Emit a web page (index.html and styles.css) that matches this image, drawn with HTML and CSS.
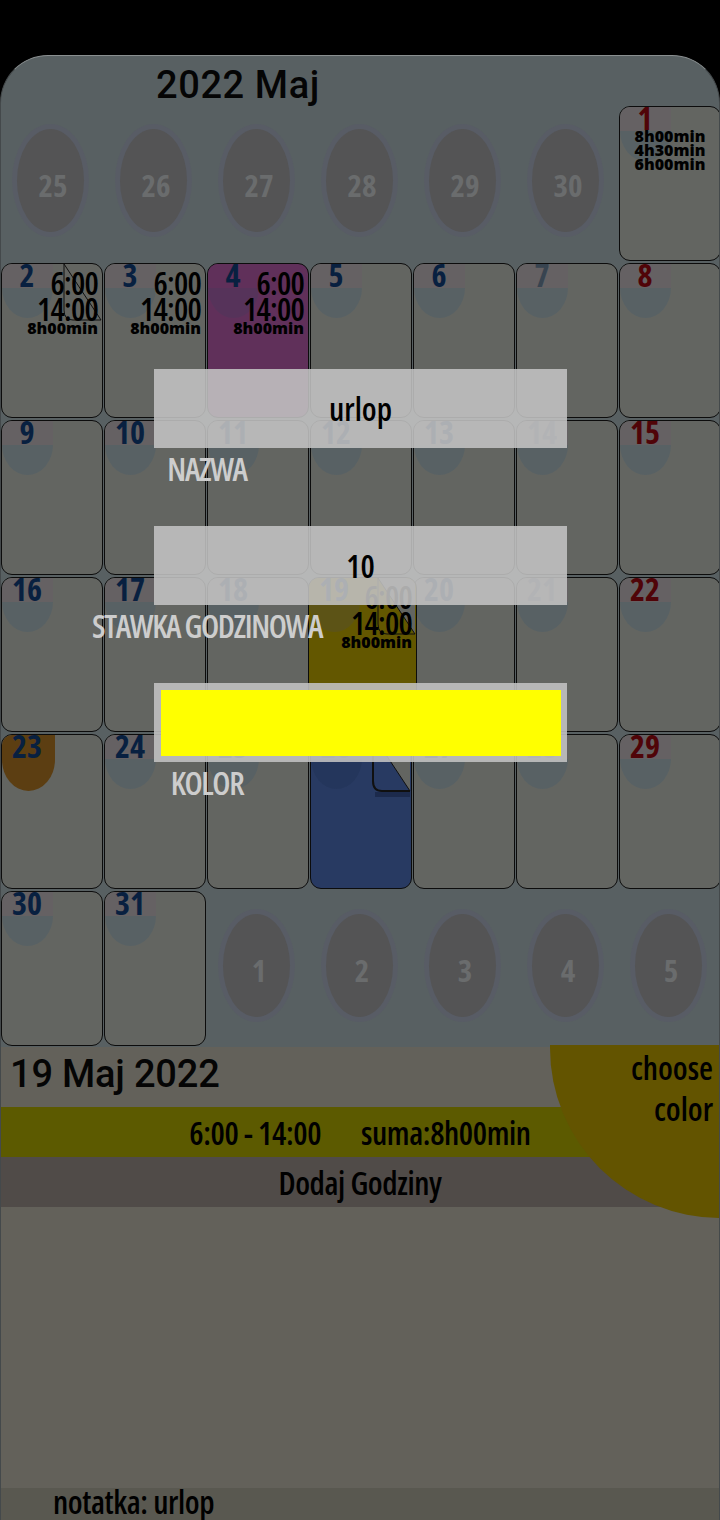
FILE: index.html
```html
<!DOCTYPE html>
<html lang="pl">
<head>
<meta charset="utf-8">
<title>Kalendarz</title>
<link rel="stylesheet" href="styles.css">
</head>
<body>
<main class="app">
  <h1 class="title">2022 Maj</h1>
  <section class="grid">
    <div class="out"><span class="oval">25</span></div>
    <div class="out"><span class="oval">26</span></div>
    <div class="out"><span class="oval">27</span></div>
    <div class="out"><span class="oval">28</span></div>
    <div class="out"><span class="oval">29</span></div>
    <div class="out"><span class="oval">30</span></div>
    <div class="day sun"><span class="num">1</span><div class="sums"><p>8h00min</p><p>4h30min</p><p>6h00min</p></div></div>

    <div class="day"><span class="num">2</span><svg class="fold" viewBox="0 0 40 58"><path d="M2 0L39 56"/><path d="M2 0V46Q2 56 11 56H39"/></svg><div class="shift"><p>6:00</p><p>14:00</p><small>8h00min</small></div></div>
    <div class="day"><span class="num">3</span><div class="shift"><p>6:00</p><p>14:00</p><small>8h00min</small></div></div>
    <div class="day pink"><span class="num">4</span><div class="shift"><p>6:00</p><p>14:00</p><small>8h00min</small></div></div>
    <div class="day"><span class="num">5</span></div>
    <div class="day"><span class="num">6</span></div>
    <div class="day sat"><span class="num">7</span></div>
    <div class="day sun"><span class="num">8</span></div>

    <div class="day"><span class="num">9</span></div>
    <div class="day"><span class="num">10</span></div>
    <div class="day"><span class="num">11</span></div>
    <div class="day"><span class="num">12</span></div>
    <div class="day"><span class="num">13</span></div>
    <div class="day sat"><span class="num">14</span></div>
    <div class="day sun"><span class="num">15</span></div>

    <div class="day"><span class="num">16</span></div>
    <div class="day"><span class="num">17</span></div>
    <div class="day"><span class="num">18</span></div>
    <div class="day gold"><span class="num">19</span><svg class="fold" viewBox="0 0 40 58"><path class="corner" d="M2 0L39 56V0Z"/><path d="M2 0L39 56"/><path d="M2 0V46Q2 56 11 56H39"/></svg><div class="shift"><p>6:00</p><p>14:00</p><small>8h00min</small></div></div>
    <div class="day"><span class="num">20</span></div>
    <div class="day sat"><span class="num">21</span></div>
    <div class="day sun"><span class="num">22</span></div>

    <div class="day orange"><span class="num">23</span></div>
    <div class="day"><span class="num">24</span></div>
    <div class="day"><span class="num">25</span></div>
    <div class="day blue"><span class="num">26</span><svg class="fold" viewBox="0 0 40 64"><path class="corner" d="M2 0L39 56V0Z"/><path class="shade" d="M4 57H39V62H4Z"/><path d="M2 0L39 56"/><path class="thick" d="M2 0V46Q2 56 11 56H39"/></svg></div>
    <div class="day"><span class="num">27</span></div>
    <div class="day sat"><span class="num">28</span></div>
    <div class="day sun"><span class="num">29</span></div>

    <div class="day"><span class="num">30</span></div>
    <div class="day"><span class="num">31</span></div>
    <div class="out"><span class="oval">1</span></div>
    <div class="out"><span class="oval">2</span></div>
    <div class="out"><span class="oval">3</span></div>
    <div class="out"><span class="oval">4</span></div>
    <div class="out"><span class="oval">5</span></div>
  </section>

  <section class="detail">
    <h2 class="date">19 Maj 2022</h2>
    <div class="bar hours"><span>6:00 - 14:00</span><span>suma:8h00min</span></div>
    <div class="bar add">Dodaj Godziny</div>
    <div class="space"></div>
    <div class="note">notatka: urlop</div>
    <div class="picker">choose<br>color</div>
  </section>

  <form class="dialog">
    <div class="group">
      <div class="field">urlop</div>
      <label class="label">NAZWA</label>
    </div>
    <div class="group">
      <div class="field">10</div>
      <label class="label">STAWKA GODZINOWA</label>
    </div>
    <div class="group">
      <div class="field swatch"><div class="swatch-fill"></div></div>
      <label class="label">KOLOR</label>
    </div>
  </form>
</main>
</body>
</html>
```
FILE: styles.css
```css
* { box-sizing: border-box; }
html, body { margin: 0; background: #000; }
body { width: 720px; height: 1520px; overflow: hidden; font-family: "Open Sans", sans-serif; font-stretch: 75%; color: #000; }
p, h1, h2 { margin: 0; font-weight: inherit; }

.app {
  position: relative;
  margin-top: 55px;
  height: 1465px;
  background: #586062;
  border-radius: 48px 48px 0 0;
  border-top: 1px solid #8a8f90;
  border-left: 1px solid #44494b;
  border-right: 1px solid #44494b;
  overflow: hidden;
}
.title {
  height: 49px;
  padding-left: 155px;
  font-family: "Roboto", sans-serif;
  font-stretch: 100%;
  font-size: 38px;
  font-weight: 500;
  line-height: 58px;
  letter-spacing: .6px;
  color: #050505;
}

.grid {
  display: grid;
  grid-template-columns: repeat(7, 103px);
  grid-auto-rows: 157px;
}
.out { display: flex; align-items: center; justify-content: center; }
.oval {
  width: 67px;
  height: 103px;
  margin: 0 4px 7px 0;
  padding: 9px 0 0 5px;
  border-radius: 50%;
  background: #545455;
  box-shadow: 0 0 0 5px #585c65;
  display: flex;
  align-items: center;
  justify-content: center;
  font-size: 31px;
  font-weight: 700;
  color: #6a6c6d;
}

.day {
  position: relative;
  margin: 1px 1px 1px 0;
  background: #636561;
  border: 1px solid #0c0c0c;
  border-radius: 11px;
  overflow: hidden;
}
.day::before {
  content: "";
  position: absolute;
  top: 0;
  left: 0;
  width: 51px;
  height: 54px;
  border-radius: 0 0 50% 50% / 0 0 56% 56%;
  background: linear-gradient(#656163 24px, #586164 24px);
}
.num {
  position: absolute;
  left: 0;
  top: -9px;
  width: 50px;
  text-align: center;
  font-size: 32px;
  line-height: 40px;
  font-weight: 700;
  color: #082040;
}
.sat .num { color: #384450; }
.sun .num { color: #500408; }

.shift {
  position: relative;
  padding: 6px 4px 0 0;
  text-align: right;
}
.shift p { font-size: 32px; line-height: 26px; font-weight: 600; letter-spacing: -.8px; }
.shift small {
  display: block;
  font-family: "Open Sans", sans-serif;
  font-stretch: 100%;
  font-size: 16px;
  font-weight: 800;
  line-height: 13px;
}
.sums {
  position: relative;
  padding-top: 22px;
  text-align: center;
  font-family: "Open Sans", sans-serif;
  font-stretch: 100%;
  font-size: 16px;
  font-weight: 800;
  line-height: 14px;
}

.fold {
  position: absolute;
  top: 0;
  right: 0;
  width: 40px;
  height: 58px;
  fill: none;
  stroke: #101010;
  stroke-width: 1;
}
.blue .fold { height: 64px; }
.corner { fill: #636561; stroke: none; }
.shade { fill: #1c2a4c; stroke: none; }
.thick { stroke-width: 2; }

.pink { background: #60305a; }
.pink::before { background: linear-gradient(#60305a 24px, #56335a 24px); }
.gold { background: #635700; margin: 1px -4px 1px -2px; z-index: 1; }
.gold::before { background: linear-gradient(#635700 24px, #5c5316 24px); }
.blue { background: #283a62; }
.blue::before { background: linear-gradient(#283a62 24px, #24365c 24px); }
.orange::before { background: #5c3e12; width: 53px; height: 56px; }

.detail {
  position: relative;
  height: 473px;
  background: #63615a;
  display: flex;
  flex-direction: column;
}
.date {
  height: 60px;
  padding-left: 9px;
  font-family: "Roboto", sans-serif;
  font-stretch: 100%;
  font-size: 38px;
  font-weight: 500;
  line-height: 54px;
  letter-spacing: -.2px;
  color: #050505;
}
.bar {
  height: 50px;
  display: flex;
  align-items: center;
  justify-content: center;
  font-size: 32px;
  font-weight: 600;
  letter-spacing: -.4px;
}
.hours { background: #5c5a00; gap: 40px; padding-top: 1px; }
.add { background: #504b48; padding-top: 1px; }
.space { flex: 1; }
.note {
  height: 32px;
  padding-left: 52px;
  background: #595850;
  font-size: 32px;
  font-weight: 600;
  letter-spacing: -.4px;
  line-height: 27px;
}
.picker {
  position: absolute;
  top: -2px;
  right: -1px;
  width: 170px;
  height: 173px;
  padding: 2px 7px 0 0;
  border-radius: 0 0 0 170px;
  background: #635400;
  text-align: right;
  font-size: 32px;
  font-weight: 600;
  line-height: 41px;
}

.dialog {
  position: absolute;
  top: 313px;
  left: 153px;
  width: 413px;
  z-index: 5;
}
.group { height: 157px; }
.field {
  height: 79px;
  display: flex;
  align-items: center;
  justify-content: center;
  background: rgba(195,195,195,.88);
  font-size: 32px;
  font-weight: 600;
}
.swatch { padding: 7px 6px 6px 7px; }
.swatch-fill { width: 100%; height: 100%; background: #ff0; }
.label {
  display: flex;
  justify-content: center;
  width: 106px;
  height: 41px;
  align-items: center;
  white-space: nowrap;
  font-size: 32px;
  font-weight: 600;
  letter-spacing: -1.4px;
  color: #cdcdcd;
}
```
